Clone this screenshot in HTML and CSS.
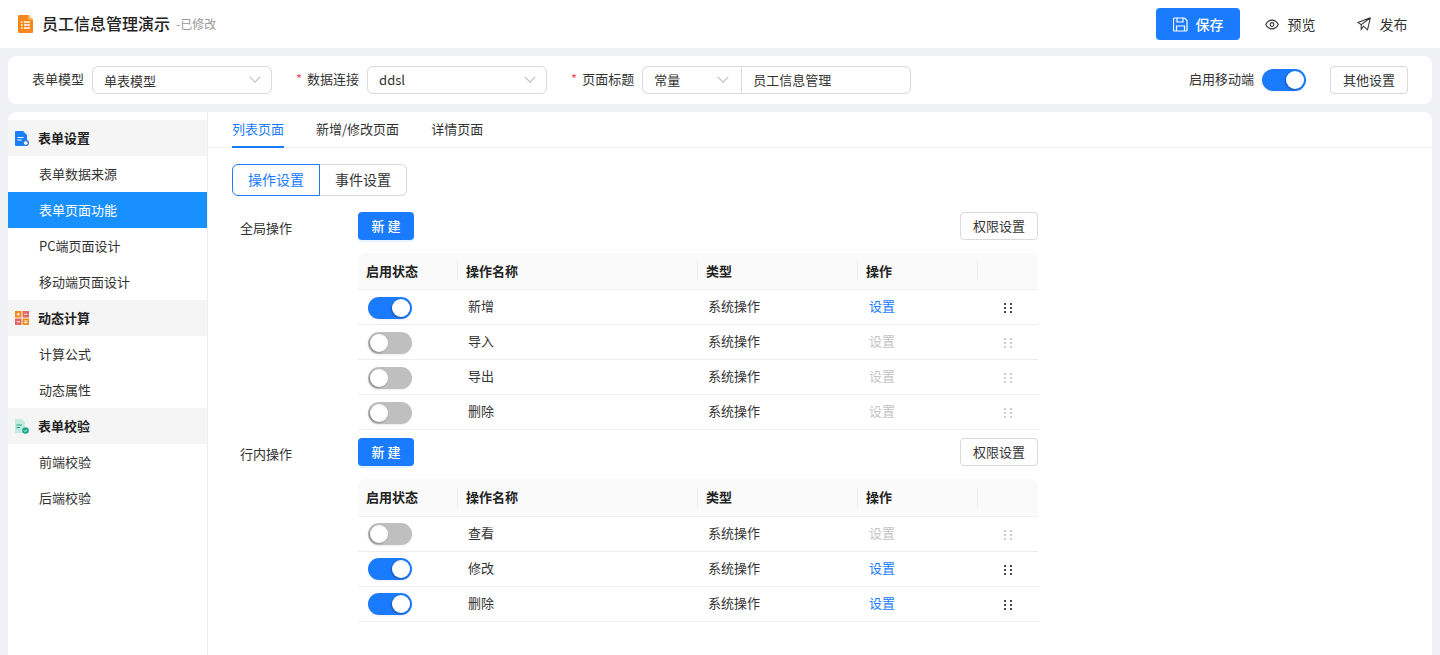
FILE: index.html
```html
<!DOCTYPE html>
<html lang="zh-CN">
<head>
  <meta charset="UTF-8" />
  <title>员工信息管理演示</title>
  <link rel="stylesheet" href="styles.css">
</head>
<body>
  <header class="top-bar">
    <div class="doc-title">
      <svg class="doc-icon" width="15" height="18" viewBox="0 0 15 18"><path d="M1 0h9.500L15 4.500V17a1 1 0 0 1-1 1H1a1 1 0 0 1-1-1V1a1 1 0 0 1 1-1z" fill="#f6871c"/><path d="M10.500 0L15 4.500h-4.500z" fill="#fbc48c"/><path d="M3 7h1.600M6 7h6M3 10h1.600M6 10h6M3 13h1.600M6 13h6" stroke="#fff" stroke-width="1.300"/></svg>
      <span class="doc-name">员工信息管理演示</span>
      <span class="doc-state">-已修改</span>
    </div>
    <div class="top-actions">
      <button class="btn-save">
        <svg width="15" height="15" viewBox="0 0 15 15" fill="none" stroke="#fff" stroke-width="1.200"><path d="M1.500 1h10l2.500 2.500v9.500a1 1 0 0 1-1 1H1.500a1 1 0 0 1-1-1V2a1 1 0 0 1 1-1z"/><path d="M4 1v4h6V1M3.500 14V9h8v5"/></svg>
        保存
      </button>
      <button class="btn-text">
        <svg width="14" height="11" viewBox="0 0 15 12" fill="none" stroke="#333" stroke-width="1.200"><path d="M.7 6C2.300 2.800 4.700 1.200 7.500 1.200S12.700 2.800 14.300 6c-1.600 3.200-4 4.800-6.800 4.800S2.300 9.200.7 6z"/><circle cx="7.500" cy="6" r="2.100"/></svg>
        预览
      </button>
      <button class="btn-text">
        <svg width="14" height="14" viewBox="0 0 15 15" fill="none" stroke="#333" stroke-width="1.100"><path d="M14.300.8L.8 5.800l3.700 2.400L14.300.8zM14.300.8l-3 13-4.400-4-2.400 3.400V8.200"/></svg>
        发布
      </button>
    </div>
  </header>

  <section class="form-bar">
    <div class="field">
      <label>表单模型</label>
      <div class="select w-model"><span>单表模型</span><i class="chev"></i></div>
    </div>
    <div class="field">
      <label class="required">数据连接</label>
      <div class="select w-conn"><span>ddsl</span><i class="chev"></i></div>
    </div>
    <div class="field">
      <label class="required">页面标题</label>
      <div class="combo">
        <div class="combo-type"><span>常量</span><i class="chev"></i></div>
        <div class="combo-value">员工信息管理</div>
      </div>
    </div>
    <div class="form-bar-right">
      <label>启用移动端</label>
      <span class="switch on"></span>
      <button class="btn-outline">其他设置</button>
    </div>
  </section>

  <div class="workspace">
    <aside class="side">
      <div class="side-group">
        <svg width="14" height="15" viewBox="0 0 14 15"><path d="M1 0h7l4 4v11H1a1 1 0 0 1-1-1V1a1 1 0 0 1 1-1z" fill="#1a7fff"/><path d="M2.500 6.500h6M2.500 9h4" stroke="#fff" stroke-width="1.200"/><circle cx="10.800" cy="12" r="2.500" fill="#fff" stroke="#3f7fd0" stroke-width="1.400"/></svg>
        表单设置
      </div>
      <a class="side-item">表单数据来源</a>
      <a class="side-item active">表单页面功能</a>
      <a class="side-item">PC端页面设计</a>
      <a class="side-item">移动端页面设计</a>
      <div class="side-group">
        <svg width="14" height="14" viewBox="0 0 14 14"><rect width="6.500" height="6.500" fill="#f08c1a"/><rect x="7.500" width="6.500" height="6.500" fill="#e06a62"/><rect y="7.500" width="6.500" height="6.500" fill="#e06a62"/><rect x="7.500" y="7.500" width="6.500" height="6.500" fill="#f08c1a"/><path d="M1.800 3.250h3M3.300 1.800v3M9.300 3.250h3M1.800 10.750h3M9.300 9.900h3M9.300 11.600h3" stroke="#fff" stroke-width="1"/></svg>
        动态计算
      </div>
      <a class="side-item">计算公式</a>
      <a class="side-item">动态属性</a>
      <div class="side-group">
        <svg width="14" height="15" viewBox="0 0 14 15"><path d="M0 0h7l3 3v11H0z" fill="#c3ebe1"/><path d="M1.500 6h5.500M1.500 8.500h3.500" stroke="#17a88a" stroke-width="1.100"/><circle cx="10.500" cy="11.500" r="3.300" fill="#17a88a"/><path d="M9 11.500l1.100 1.100 1.900-1.900" stroke="#fff" stroke-width="1" fill="none"/></svg>
        表单校验
      </div>
      <a class="side-item">前端校验</a>
      <a class="side-item">后端校验</a>
    </aside>

    <main class="panel">
      <nav class="tabs">
        <a class="tab active">列表页面</a>
        <a class="tab">新增/修改页面</a>
        <a class="tab">详情页面</a>
      </nav>
      <div class="panel-body">
        <div class="segment">
          <span class="seg active">操作设置</span><span class="seg">事件设置</span>
        </div>

        <section class="op-block">
          <div class="op-label">全局操作</div>
          <div class="op-main">
            <div class="op-tools">
              <button class="btn-primary">新 建</button>
              <button class="btn-outline">权限设置</button>
            </div>
            <table class="op-table">
              <thead>
                <tr><th>启用状态</th><th>操作名称</th><th>类型</th><th>操作</th><th></th></tr>
              </thead>
              <tbody>
                <tr><td><span class="switch on"></span></td><td class="name">新增</td><td class="kind">系统操作</td><td class="act"><a>设置</a></td><td class="drag-cell"><i class="drag"></i></td></tr>
                <tr class="off"><td><span class="switch"></span></td><td class="name">导入</td><td class="kind">系统操作</td><td class="act"><a>设置</a></td><td class="drag-cell"><i class="drag"></i></td></tr>
                <tr class="off"><td><span class="switch"></span></td><td class="name">导出</td><td class="kind">系统操作</td><td class="act"><a>设置</a></td><td class="drag-cell"><i class="drag"></i></td></tr>
                <tr class="off"><td><span class="switch"></span></td><td class="name">删除</td><td class="kind">系统操作</td><td class="act"><a>设置</a></td><td class="drag-cell"><i class="drag"></i></td></tr>
              </tbody>
            </table>
          </div>
        </section>

        <section class="op-block">
          <div class="op-label">行内操作</div>
          <div class="op-main">
            <div class="op-tools">
              <button class="btn-primary">新 建</button>
              <button class="btn-outline">权限设置</button>
            </div>
            <table class="op-table inline-ops">
              <thead>
                <tr><th>启用状态</th><th>操作名称</th><th>类型</th><th>操作</th><th></th></tr>
              </thead>
              <tbody>
                <tr class="off"><td><span class="switch"></span></td><td class="name">查看</td><td class="kind">系统操作</td><td class="act"><a>设置</a></td><td class="drag-cell"><i class="drag"></i></td></tr>
                <tr><td><span class="switch on"></span></td><td class="name">修改</td><td class="kind">系统操作</td><td class="act"><a>设置</a></td><td class="drag-cell"><i class="drag"></i></td></tr>
                <tr><td><span class="switch on"></span></td><td class="name">删除</td><td class="kind">系统操作</td><td class="act"><a>设置</a></td><td class="drag-cell"><i class="drag"></i></td></tr>
              </tbody>
            </table>
          </div>
        </section>
      </div>
    </main>
  </div>
</body>
</html>
```

FILE: styles.css
```css
/* Base */
* { box-sizing:border-box; }
html, body { height:100%; }
body { margin:0; height:655px; overflow:hidden; background:#f0f1f5; color:#333; font-family:"Noto Sans CJK SC", "Noto Sans", sans-serif; font-size:13px; line-height:20px; display:flex; flex-direction:column; }
button { font-family:inherit; cursor:pointer; }
a { text-decoration:none; color:inherit; }

/* Top bar */
.top-bar { height:48px; flex:none; background:#fff; display:flex; align-items:center; justify-content:space-between; padding:0 16px 0 18px; }
.doc-title { display:flex; align-items:center; }
.doc-icon { margin-right:9px; }
.doc-name { font-size:16px; font-weight:500; color:#222; padding-bottom:2px; }
.doc-state { font-size:12px; color:#999; margin-left:6px; padding-bottom:1px; }
.top-actions { display:flex; align-items:center; gap:8px; }
.btn-save { width:84px; height:32px; border:none; border-radius:4px; background:#1a7bff; color:#fff; font-size:14px; font-weight:500; display:flex; align-items:center; justify-content:center; gap:8px; }
.btn-text { width:84px; height:32px; border:none; background:none; color:#333; font-size:14px; display:flex; align-items:center; justify-content:center; gap:9px; padding:0; }

/* Form bar */
.form-bar { flex:none; height:48px; margin:8px 8px 0; background:#fff; border-radius:8px; display:flex; align-items:center; padding:0 24px; }
.field { display:flex; align-items:center; gap:8px; margin-right:24px; }
.field label, .form-bar-right label { color:#333; padding-bottom:3px; }
.required::before { content:"*"; color:#f5495b; margin-right:5px; }
.select { height:28px; border:1px solid #d9d9d9; border-radius:6px; display:flex; align-items:center; justify-content:space-between; padding:0 12px 0 11px; }
.w-model .chev, .w-conn .chev { margin-right:0; }
.w-model span { padding-top:1px; }
.w-model { width:180px; }
.w-conn { width:180px; }
.chev { width:8px; height:8px; border-right:1px solid #bbb; border-bottom:1px solid #bbb; transform:rotate(45deg) translate(-2px,-2px); margin-right:2px; }
.combo { width:269px; height:28px; border:1px solid #d9d9d9; border-radius:6px; display:flex; }
.combo-type { width:99px; flex:none; border-right:1px solid #d9d9d9; display:flex; align-items:center; justify-content:space-between; padding:0 12px 0 11px; }
.combo-value { padding:0 11px; line-height:25px; }
.form-bar-right { margin-left:auto; display:flex; align-items:center; }
.form-bar-right .switch { margin:0 24px 0 8px; }
.btn-outline { width:78px; height:28px; background:#fff; border:1px solid #d9d9d9; border-radius:4px; color:#333; font-size:13px; padding:0 0 2px; }

/* Switch */
.switch { display:inline-block; position:relative; width:44px; height:22px; border-radius:11px; background:#bfbfbf; vertical-align:middle; box-shadow:0 1px 2px rgba(0,0,0,.08); }
.switch::after { content:""; position:absolute; top:2px; left:2px; width:18px; height:18px; border-radius:50%; background:#fff; box-shadow:-1px 1px 2px rgba(0,0,0,.3); }
.switch.on { background:#1a7bff; }
.switch.on::after { left:24px; }

/* Workspace */
.workspace { flex:1; min-height:0; margin:8px 8px 0; display:flex; background:#fff; border-radius:8px 8px 0 0; overflow:hidden; }
.side { width:200px; flex:none; padding-top:8px; border-right:1px solid #eee; }
.side-group { height:36px; background:#f5f5f5; display:flex; align-items:center; gap:9px; padding-left:7px; font-weight:700; color:#222; }
.side-item { display:block; height:36px; line-height:35px; padding-left:31px; color:#333; }
.side-item.active { background:#1890ff; color:#fff; }

/* Panel */
.panel { flex:1; min-width:0; }
.tabs { height:36px; border-bottom:1px solid #eee; display:flex; gap:32px; padding-left:24px; }
.tab { height:36px; line-height:34px; color:#333; }
.tab.active { color:#1a7bff; border-bottom:2px solid #1a7bff; }
.panel-body { padding:16px 24px 0; }
.segment { display:flex; margin-bottom:16px; height:32px; }
.seg { width:87px; height:32px; line-height:29px; text-align:center; border:1px solid #d9d9d9; border-left:none; border-radius:0 6px 6px 0; font-size:14px; }
.seg.active { width:88px; border:1px solid #1a7bff; border-radius:6px 0 0 6px; color:#1a7bff; }

/* Operation blocks */
.op-block { display:flex; width:806px; }
.op-block + .op-block { margin-top:8px; }
.op-label { width:126px; flex:none; padding:6px 0 0 8px; }
.op-main { flex:1; min-width:0; }
.op-tools { display:flex; justify-content:space-between; margin-bottom:13px; }
.btn-primary { width:56px; height:28px; background:#1a7bff; border:none; border-radius:4px; color:#fff; font-size:13px; font-weight:500; padding:0 0 2px; box-shadow:0 2px 0 rgba(5,145,255,.1); }
.op-table { width:680px; border-collapse:separate; border-spacing:0; table-layout:fixed; }
.op-table th { position:relative; height:37px; padding:0 8px; background:#fafafa; border-bottom:1px solid #f0f0f0; text-align:left; font-weight:700; color:#222; }
.inline-ops th { height:38px; padding-bottom:2px; }
.op-table th:first-child { width:100px; border-top-left-radius:8px; }
.op-table th:nth-child(2) { width:240px; }
.op-table th:nth-child(3) { width:160px; }
.op-table th:nth-child(4) { width:120px; }
.op-table th:last-child { border-top-right-radius:8px; }
.op-table th:not(:last-child)::after { content:""; position:absolute; right:0; top:8px; bottom:8px; width:1px; background:#f0f0f0; }
.op-table td { height:35px; padding:0 10px 2px; border-bottom:1px solid #eee; color:#333; }
.op-table td:first-child { padding:2px 10px 0; }
.inline-ops td:first-child { padding:0 10px; }
.act { padding-left:11px !important; }
.act a { color:#1a7bff; }
.off .act a { color:#c4c4c4; }
.op-table .drag-cell { text-align:center; padding:0 0 1px; }
.drag { display:inline-block; width:12px; height:12px; vertical-align:middle; background-image:radial-gradient(circle, #444 .7px, transparent 1.05px); background-size:6px 4px; }
.off .drag { background-image:radial-gradient(circle, #ccc .7px, transparent 1.05px); }
```
